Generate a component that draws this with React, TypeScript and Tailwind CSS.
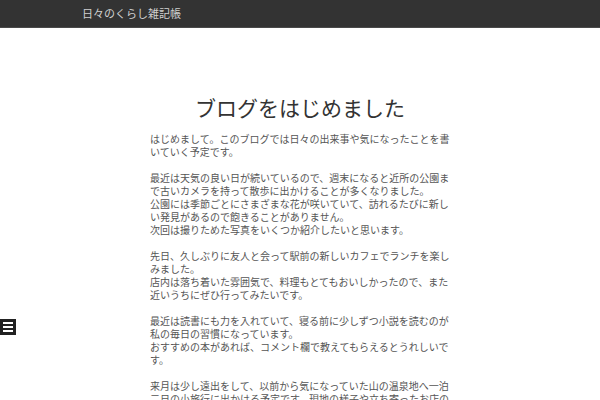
import React from 'react';

const font = { fontFamily: '"Noto Sans CJK JP", "Noto Sans", sans-serif' };

const paragraphs: string[][] = [
  ['はじめまして。このブログでは日々の出来事や気になったことを書いていく予定です。'],
  [
    '最近は天気の良い日が続いているので、週末になると近所の公園まで古いカメラを持って散歩に出かけることが多くなりました。',
    '公園には季節ごとにさまざまな花が咲いていて、訪れるたびに新しい発見があるので飽きることがありません。',
    '次回は撮りためた写真をいくつか紹介したいと思います。',
  ],
  [
    '先日、久しぶりに友人と会って駅前の新しいカフェでランチを楽しみました。',
    '店内は落ち着いた雰囲気で、料理もとてもおいしかったので、また近いうちにぜひ行ってみたいです。',
  ],
  [
    '最近は読書にも力を入れていて、寝る前に少しずつ小説を読むのが私の毎日の習慣になっています。',
    'おすすめの本があれば、コメント欄で教えてもらえるとうれしいです。',
  ],
  [
    '来月は少し遠出をして、以前から気になっていた山の温泉地へ一泊二日の小旅行に出かける予定です。現地の様子や立ち寄ったお店のことなども、写真と一緒にこのブログで詳しく紹介していきたいと思っていますので、楽しみにしていてください。',
  ],
];

export default function App() {
  return (
    <div className="min-h-screen bg-white" style={font}>
      {/* Header */}
      <header className="h-[28px] bg-[#333] border-b border-[#4a4a4a] flex items-center">
        <div className="pl-[82px] text-[11px] leading-none text-[#d0d0d0]">日々のくらし雑記帳</div>
      </header>

      {/* Article */}
      <main className="w-[300px] mx-auto pt-[64px]">
        <h1 className="text-[21px] leading-[30px] text-center text-[#333] font-normal mb-[10px]">
          ブログをはじめました
        </h1>
        <div className="flex flex-col gap-[13px] text-[10px] leading-[13px] text-[#555]">
          {paragraphs.map((lines, i) => (
            <p key={i}>
              {lines.map((line, j) => (
                <React.Fragment key={j}>
                  {j > 0 && <br />}
                  {line}
                </React.Fragment>
              ))}
            </p>
          ))}
        </div>
      </main>

      {/* Menu toggle */}
      <button className="fixed left-0 top-[319px] w-4 h-4 bg-[#222] flex flex-col items-center justify-center gap-[2px]">
        <span className="block w-[10px] h-[2px] bg-white" />
        <span className="block w-[10px] h-[2px] bg-white" />
        <span className="block w-[10px] h-[2px] bg-white" />
      </button>
    </div>
  );
}
